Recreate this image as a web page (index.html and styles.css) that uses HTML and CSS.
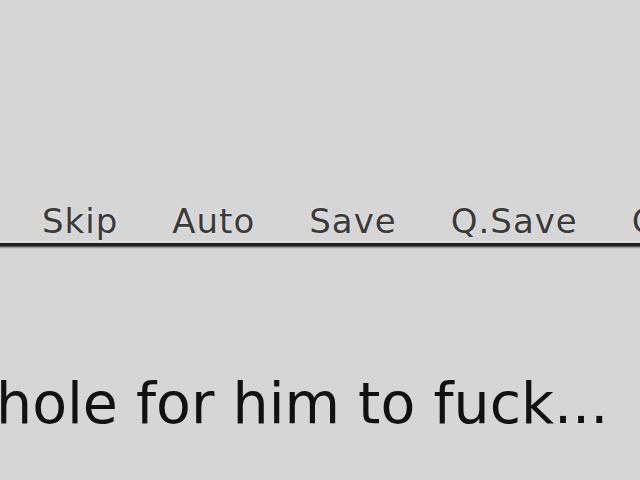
FILE: index.html
```html
<!DOCTYPE html>
<html>
<head>
<meta charset="utf-8">
<link rel="stylesheet" href="styles.css">
</head>
<body>
<div class="screen">
  <nav class="quick-menu">
    <span class="qm-item">Skip</span>
    <span class="qm-item">Auto</span>
    <span class="qm-item">Save</span>
    <span class="qm-item">Q.Save</span>
    <span class="qm-item">Q.Load</span>
  </nav>
  <div class="divider"></div>
  <div class="dialogue">hole for him to fuck...</div>
</div>
</body>
</html>
```
FILE: styles.css
```css
html, body {
  margin: 0;
  padding: 0;
  background: #d6d6d6;
  width: 640px;
  height: 480px;
  overflow: hidden;
}
.screen {
  font-family: "DejaVu Sans", sans-serif;
  padding-top: 201px;
}
.quick-menu {
  display: flex;
  gap: 54px;
  padding-left: 42px;
  font-size: 34px;
  letter-spacing: 1px;
  line-height: 40px;
  color: #3a3a3a;
  white-space: nowrap;
  text-shadow: 0 0 2px #f2f2f2;
}
.divider {
  height: 8px;
  background: linear-gradient(to bottom, #e6e6e6 0, #e6e6e6 1px, #d6d6d6 1px, #d6d6d6 2px, #222 2px, #222 5px, #8a8a8a 6px, #d6d6d6 8px);
}
.dialogue {
  margin-top: 121px;
  font-size: 57px;
  line-height: 66px;
  color: #111;
  text-indent: -4px;
  white-space: nowrap;
}
```
